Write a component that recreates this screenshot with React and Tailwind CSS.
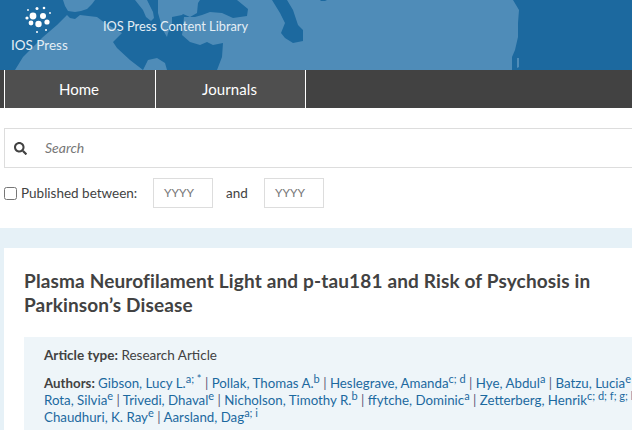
import React from "react";
import { FaSearch } from "react-icons/fa";

const authorLines = [
  [
    ["Gibson, Lucy L.", "a; *"],
    ["Pollak, Thomas A.", "b"],
    ["Heslegrave, Amanda", "c; d"],
    ["Hye, Abdul", "a"],
    ["Batzu, Lucia", "e"],
  ],
  [
    ["Rota, Silvia", "e"],
    ["Trivedi, Dhaval", "e"],
    ["Nicholson, Timothy R.", "b"],
    ["ffytche, Dominic", "a"],
    ["Zetterberg, Henrik", "c; d; f; g; h"],
  ],
  [
    ["Chaudhuri, K. Ray", "e"],
    ["Aarsland, Dag", "a; i"],
  ],
];

const MapBanner = () => (
  <svg className="absolute inset-0" width="632" height="70" viewBox="0 0 632 70">
    <rect width="632" height="70" fill="#4f8cb8" />
    <g fill="#1c699f">
      <path d="M0 0L63 0L65 6L68 11L75 12L81 11L87 9L92 4L95 0L158 0L158 13L163 30L167 37L168 33L172 23L172 17L182 15L183 14L190 17L195 17L202 15L210 12L222 13L233 18L247 16L248 9L237 0L200 0L198 3L197 13L190 17L184 17L183 28L182 35L190 42L200 45L207 42L213 45L223 43L222 57L217 70L167 70L165 63L157 58L148 60L143 70L130 60L117 48L113 42L122 33L105 23L97 17L80 15L75 19L70 18L67 15L57 25L43 37L23 57L15 70L0 70Z" />
      <path d="M272 0L287 0L293 10L298 25L303 30L303 41L293 43L285 38L281 33L285 23L280 13Z" />
      <path d="M513 0L519 10L518 23L518 37L515 50L512 57L512 70L632 70L632 0Z" />
      <path d="M320 0L327 0L325 1L321 1Z" />
    </g>
    <path d="M135 0L143 10L146 17L151 21L154 18L153 12L147 0Z" fill="#4f8cb8" />
    <path d="M517 58L519 58L519 67L517 68Z" fill="#4f8cb8" />
    <g fill="#fff">
      <circle cx="33" cy="16" r="3.4" />
      <circle cx="43" cy="16" r="3" />
      <circle cx="38.5" cy="24" r="3.2" />
      <circle cx="31" cy="23" r="2.4" />
      <circle cx="47" cy="22" r="2.6" />
      <circle cx="27" cy="18" r="1.6" />
      <circle cx="37" cy="8.5" r="1.5" />
      <circle cx="44" cy="8" r="1.3" />
      <circle cx="28" cy="10" r="0.9" />
      <circle cx="50" cy="13" r="0.9" />
      <circle cx="46" cy="30" r="1" />
      <circle cx="37" cy="32" r="1" />
    </g>
  </svg>
);

const App = () => {
  return (
    <div className="w-[632px] h-[430px] overflow-hidden bg-white font-['Lato',sans-serif] text-[#424242]">
      <div className="w-[1000px]">
        <div className="relative h-[70px] w-[632px] text-[#e4eef5]">
          <MapBanner />
          <div className="relative flex">
            <div className="w-[103px] pl-[11px] pt-[37px] text-[13.5px] leading-[17px]">
              IOS Press
            </div>
            <div className="pt-[18px] text-[12.8px] leading-[16px]">
              IOS Press Content Library
            </div>
          </div>
        </div>

        <div className="flex h-[38px] bg-[#424242] pl-1 text-[15px] text-white">
          <div className="flex w-[152px] items-center justify-center border-x border-white bg-[#4f4f4f]">
            <span className="-ml-[2px]">Home</span>
          </div>
          <div className="flex w-[150px] items-center justify-center border-r border-white bg-[#4f4f4f]">
            <span className="-ml-[2px] tracking-[0.1px]">Journals</span>
          </div>
        </div>

        <div className="px-1 pt-5">
          <div className="flex h-10 items-center border border-[#dddddd]">
            <FaSearch className="ml-[9px] text-[13px] text-[#424242]" />
            <span className="ml-[18px] -mt-[2px] text-[14px] italic text-[#777777]">Search</span>
          </div>
          <div className="mt-[10px] flex h-[30px] items-center text-[13.5px]">
            <div className="flex w-[149px] items-center">
              <input type="checkbox" className="h-[13px] w-[13px]" readOnly />
              <span className="ml-1">Published between:</span>
            </div>
            <div className="flex h-[30px] w-[60px] items-center border border-[#dddddd] pl-[10px] text-[12px] text-[#777777]">
              YYYY
            </div>
            <span className="ml-[13px] w-[38px]">and</span>
            <div className="flex h-[30px] w-[60px] items-center border border-[#dddddd] pl-[10px] text-[12px] text-[#777777]">
              YYYY
            </div>
          </div>
        </div>

        <div className="mt-5 bg-[#e6f1f7] pl-1 pt-5">
          <div className="bg-white pl-5 pt-[21px]">
            <h1 className="text-[19px] font-bold leading-6 tracking-[0.15px]">
              Plasma Neurofilament Light and p-tau181 and Risk of Psychosis in
              <br />
              Parkinson’s Disease
            </h1>
            <div className="mt-5 bg-[#eef5f9] pl-5 pt-[9px] pb-5 text-[13.3px]">
              <p className="leading-[18px] text-[13.5px]">
                <b>Article type:</b> Research Article
              </p>
              <div className="mt-[11px] leading-[17px] whitespace-nowrap text-[#1c699f]">
                {authorLines.map((line, i) => (
                  <div key={i} className="h-[17px]">
                    {i === 0 && <b className="text-[#424242]">Authors: </b>}
                    {line.map(([name, sup], j) => (
                      <span key={name}>
                        {j > 0 && <span className="text-[#5a5a78]"> | </span>}
                        {name}
                        <sup className="text-[11px] leading-none">{sup}</sup>
                      </span>
                    ))}
                  </div>
                ))}
              </div>
            </div>
          </div>
        </div>
      </div>
    </div>
  );
};

export default App;
